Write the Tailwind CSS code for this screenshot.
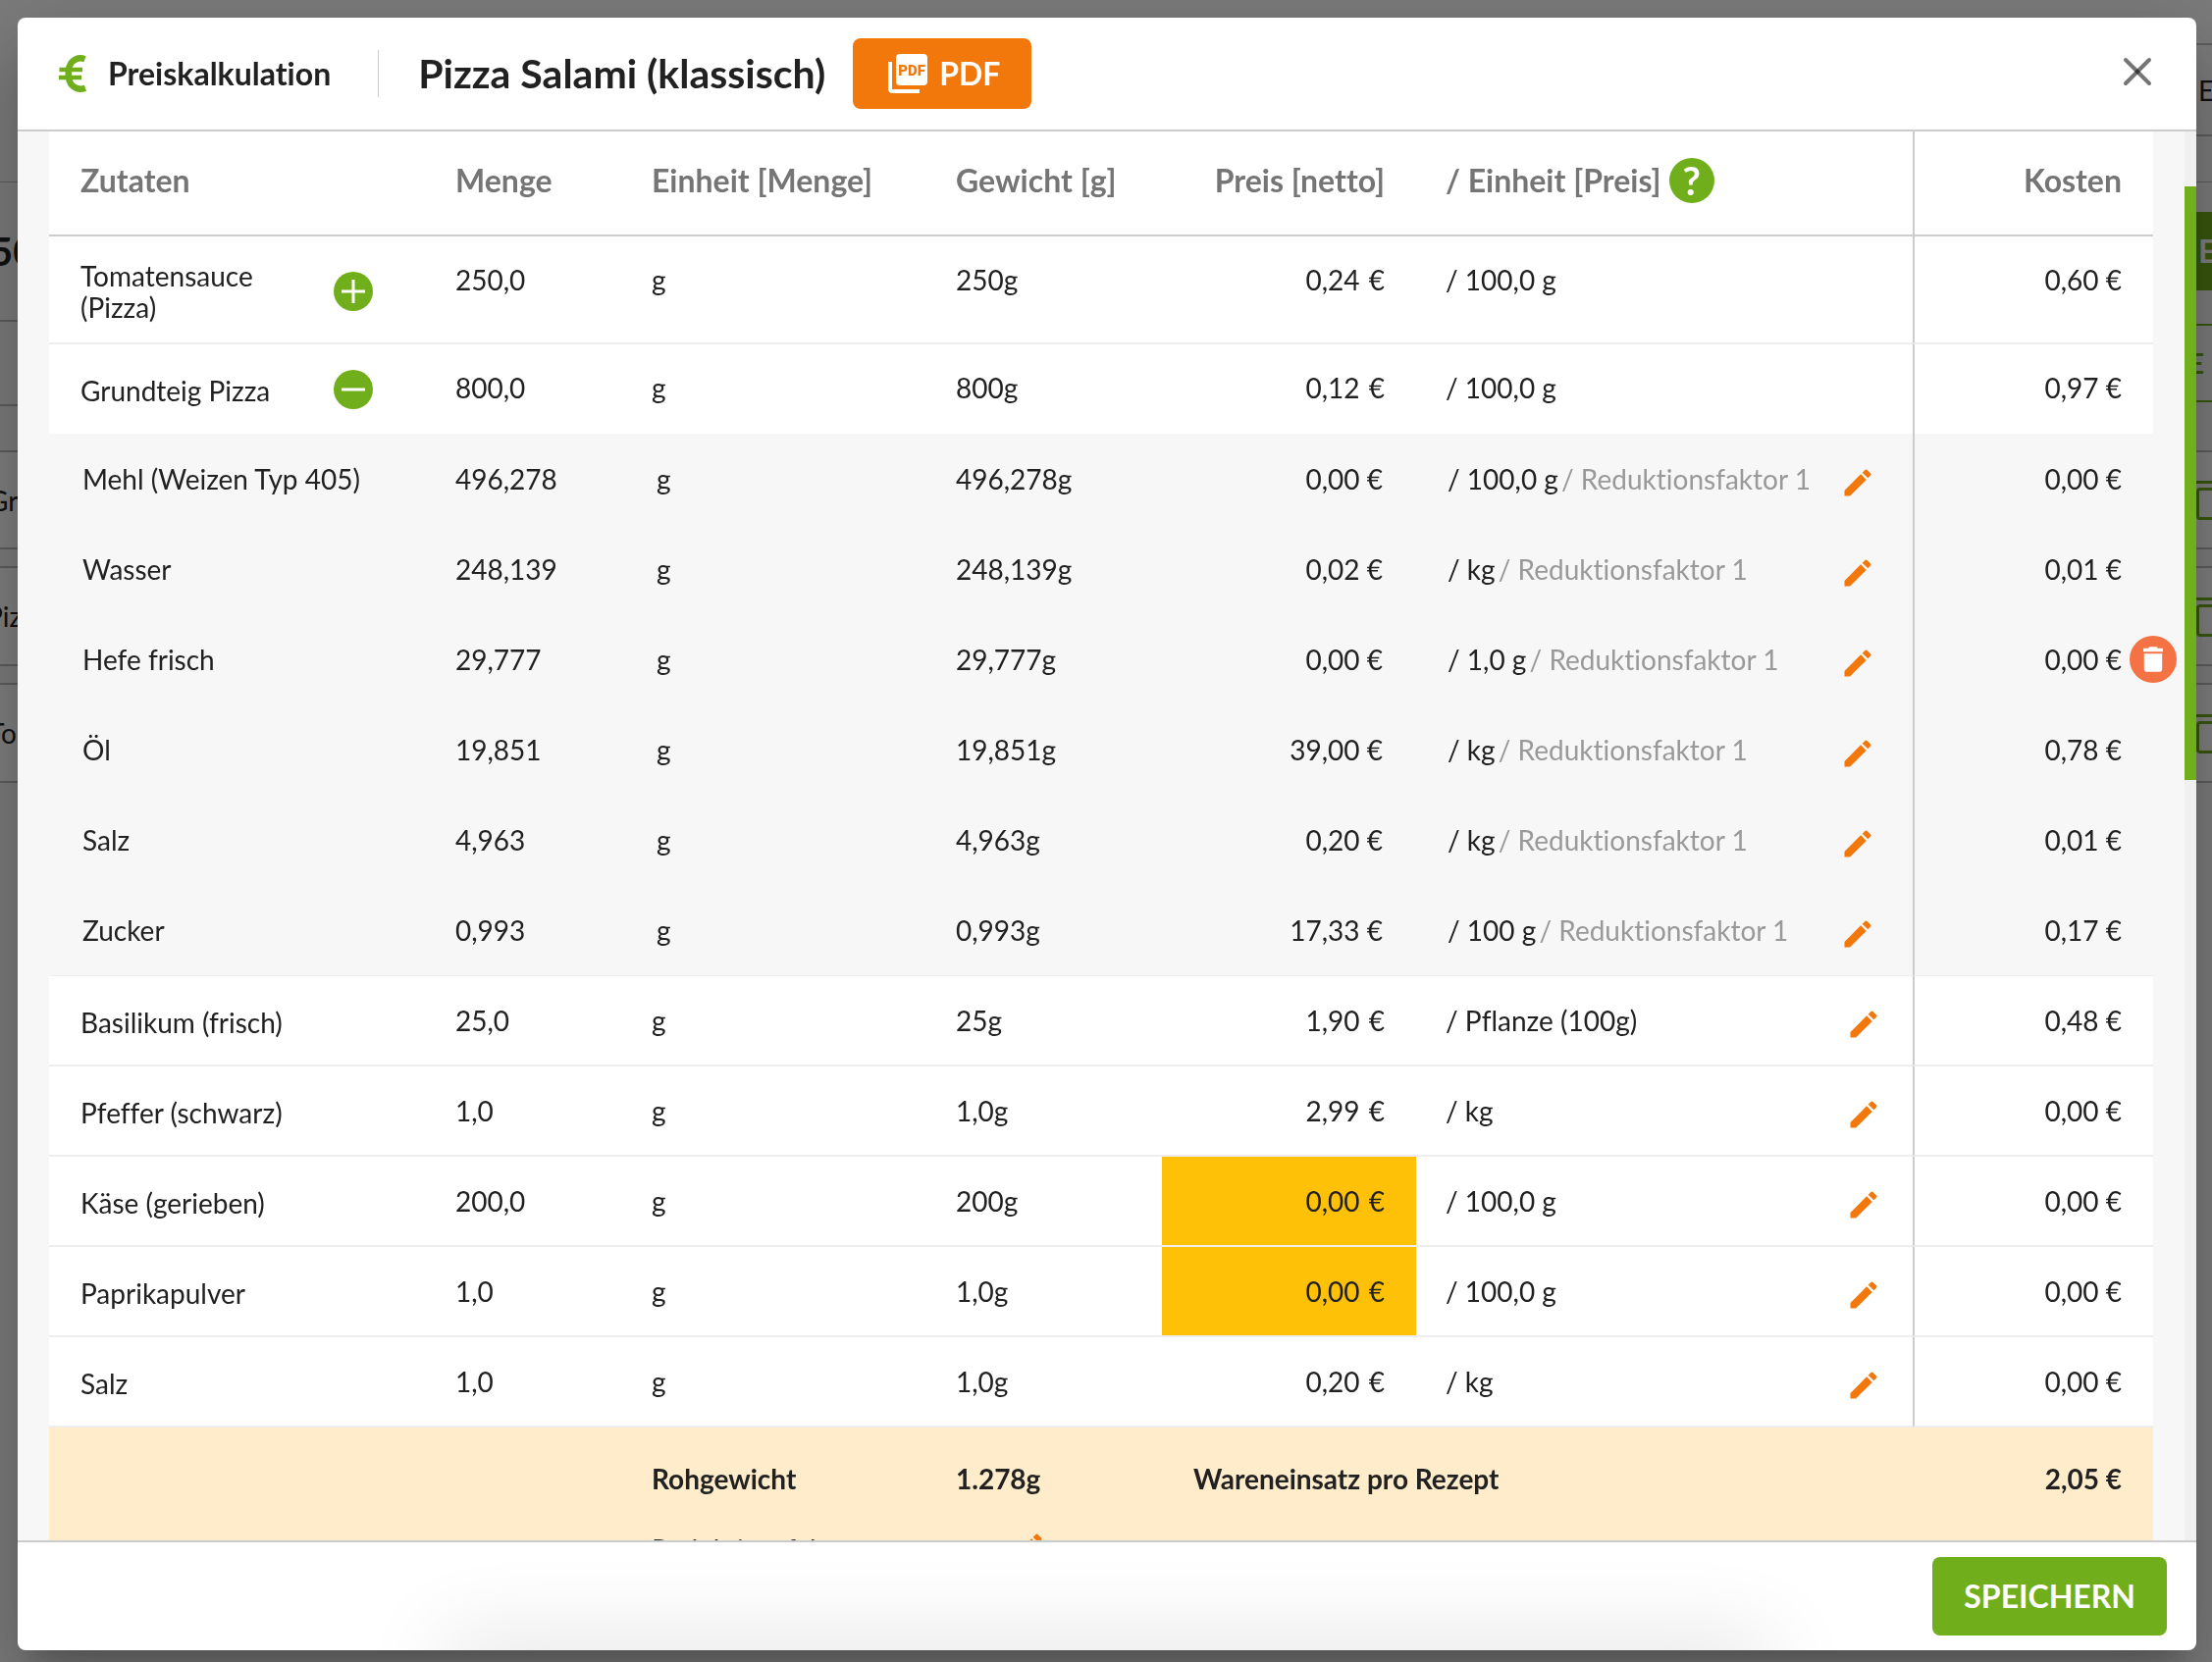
<!DOCTYPE html>
<html lang="de">
<head>
<meta charset="utf-8">
<title>Preiskalkulation</title>
<script src="https://cdn.jsdelivr.net/npm/@tailwindcss/browser@4"></script>
</head>
<body class="h-screen overflow-hidden bg-[#f7f7f7] font-['Lato',sans-serif] text-[28px] leading-8 text-[#212121] [font-variant-ligatures:no-common-ligatures]">

<!-- Page behind the dialog -->
<div aria-hidden="true" class="flex h-screen justify-between overflow-hidden">
  <div class="w-24 overflow-hidden">
    <div class="h-[186px] border-b border-[#bbb]"></div>
    <div class="flex h-[142px] items-center border-b-2 border-[#bbb]"><span class="-ml-2.5 text-[40px] font-bold">50</span></div>
    <div class="h-[86px] border-b-2 border-[#bbb]"></div>
    <div class="mt-[45px] flex h-[101px] items-center border-y-2 border-[#bbb] bg-white"><span class="-ml-3">Gr</span></div>
    <div class="mt-[17px] flex h-[102px] items-center border-y-2 border-[#bbb] bg-white"><span class="-ml-3.5">Piz</span></div>
    <div class="mt-[17px] flex h-[102px] items-center border-y-2 border-[#bbb] bg-white"><span class="-ml-3">To</span></div>
  </div>
  <div class="w-6 overflow-hidden">
    <div class="mt-11 flex h-[95px] items-center border-y-2 border-[#bbb] text-[28px]"><span class="-ml-4">ME</span></div>
    <div class="h-[47px] border-b border-[#bbb]"></div>
    <div class="mt-[30px] flex h-20 items-center bg-[#70ae1b] pl-2.5 text-[32px] font-bold text-white">E</div>
    <div class="mt-[34px] flex h-20 items-center border-y-2 border-[#70ae1b] text-[28px] font-bold text-[#70ae1b]">E&nbsp;I</div>
    <div class="mt-[49px] h-[101px] border-y-2 border-[#bbb] bg-white pt-[29px]"><div class="h-[3px] bg-[#70ae1b]"></div><div class="ml-2 mt-1 h-[33px] w-8 rounded border-[3px] border-[#70ae1b]"></div></div>
    <div class="mt-[17px] h-[102px] border-y-2 border-[#bbb] bg-white pt-[30px]"><div class="h-[3px] bg-[#70ae1b]"></div><div class="ml-2 mt-1 h-[33px] w-8 rounded border-[3px] border-[#70ae1b]"></div></div>
    <div class="mt-[17px] h-[102px] border-y-2 border-[#bbb] bg-white pt-[30px]"><div class="h-[3px] bg-[#70ae1b]"></div><div class="ml-2 mt-1 h-[33px] w-8 rounded border-[3px] border-[#70ae1b]"></div></div>
  </div>
</div>

<svg class="hidden">
  <symbol id="pencil" viewBox="0 0 24 24"><path fill="currentColor" d="M3 17.25V21h3.75L17.81 9.94l-3.75-3.75L3 17.25zM20.71 7.04a1 1 0 0 0 0-1.41l-2.34-2.34a1 1 0 0 0-1.41 0l-1.83 1.83 3.75 3.75 1.83-1.83z"/></symbol>
</svg>

<!-- Dialog -->
<div class="fixed inset-0 flex bg-black/50 px-4 pb-3 pt-[18px] pl-[18px]">
  <section role="dialog" aria-labelledby="title" class="flex min-h-0 flex-1 flex-col rounded-lg bg-white shadow-[0_22px_30px_-14px_rgba(0,0,0,0.2),0_48px_76px_6px_rgba(0,0,0,0.14),0_18px_92px_16px_rgba(0,0,0,0.12)]">
    <header class="flex h-[116px] shrink-0 items-center border-b-2 border-[#ccc] pl-[42px] pr-11">
      <svg class="h-10 w-7 text-[#70ae1b]" viewBox="0 0 28 40" fill="none" stroke="currentColor"><path stroke-width="6.500" d="M26.500 5.200C22 3.500 17 4.500 13.500 8C8.500 13 8.500 27 13.500 32C17 35.500 22 36.500 27 34.800"/><path stroke-width="4.500" d="M0.500 16H24M0 24H23"/></svg>
      <span class="ml-[22px] text-[32px] font-bold leading-10">Preiskalkulation</span>
      <span class="ml-12 h-12 w-px bg-[#ccc]"></span>
      <h1 id="title" class="ml-10 text-[41px] font-bold leading-12">Pizza Salami (klassisch)</h1>
      <button class="ml-7 flex h-[72px] items-center gap-2 rounded-lg bg-[#f3780c] px-8 text-[32px] font-bold text-white">
        <svg class="size-12" viewBox="0 0 24 24"><rect x="6" y="2" width="16" height="16" rx="2" fill="#fff"/><path fill="#fff" d="M4 6H2v14c0 1.100.9 2 2 2h14v-2H4z"/><text x="14" y="13" text-anchor="middle" font-family="Roboto, sans-serif" font-weight="900" font-size="7.500" fill="#f3780c">PDF</text></svg>
        PDF
      </button>
      <button aria-label="Schließen" class="mb-1 ml-auto size-8">
        <svg class="size-8" viewBox="0 0 32 32" stroke="#000" stroke-opacity=".54" stroke-width="4" stroke-linecap="round"><path d="M4 4L28 28"/><path d="M28 4L4 28"/></svg>
      </button>
    </header>

    <div class="flex min-h-0 flex-1 overflow-hidden bg-[#f7f7f7]">
      <div class="min-w-0 flex-1 px-8">
        <table class="w-full table-fixed border-separate border-spacing-0 bg-white">
          <colgroup><col class="w-[382px]"><col class="w-[200px]"><col class="w-[310px]"><col class="w-[242px]"><col class="w-[259px]"><col><col class="w-[245px]"></colgroup>
          <thead>
            <tr class="h-[107px] text-left text-[32px] text-[#757575] *:border-b-2 *:border-[#ccc] *:pb-1.5 *:font-bold *:whitespace-nowrap">
              <th class="pl-8">Zutaten</th><th class="pl-8">Menge</th><th class="pl-8">Einheit [Menge]</th><th class="pl-8">Gewicht [g]</th><th class="pr-8 text-right">Preis [netto]</th>
              <th class="pl-[30px]"><span class="flex items-center gap-2">/ Einheit [Preis] <button aria-label="Hilfe" class="flex size-[46px] items-center justify-center rounded-full bg-[#70ae1b] text-[40px] font-bold leading-none text-white">?</button></span></th>
              <th class="border-l-2 pr-8 text-right">Kosten</th>
            </tr>
          </thead>
          <tbody id="rows"></tbody>
          <tfoot>
            <tr class="h-[72px] bg-[#feecca] font-bold *:px-8 *:pt-9 *:align-top">
              <td></td><td></td><td>Rohgewicht</td><td>1.278g</td><td colspan="2">Wareneinsatz pro Rezept</td><td class="text-right">2,05 €</td>
            </tr>
            <tr class="h-[72px] bg-[#feecca] *:px-8 *:pt-9 *:align-top">
              <td></td><td></td><td>Reduktionsfaktor</td><td><button aria-label="Bearbeiten" class="-mt-1 ml-14 block text-[#f3780c]"><svg class="size-9"><use href="#pencil"/></svg></button></td><td colspan="2"></td><td></td>
            </tr>
          </tfoot>
        </table>
      </div>
      <div class="w-3 shrink-0 bg-[#f0f0f0] pt-14"><div class="h-[605px] bg-[#70ae1b]"></div></div>
    </div>

    <footer class="relative flex h-28 shrink-0 items-center justify-end overflow-hidden rounded-b-lg border-t-2 border-[#ccc] pr-[30px]">
      <div class="absolute left-[20%] right-[20%] top-full h-10 shadow-[0_0_90px_10px_rgba(0,0,0,0.12)]"></div>
      <button class="relative h-20 rounded-lg bg-[#70ae1b] px-8 text-[32px] font-bold text-white">SPEICHERN</button>
    </footer>
  </section>
</div>

<script>
  const REDUCTION = 'Reduktionsfaktor 1';
  // sub: ingredient nested in the opened recipe; missing: no price entered yet
  const rows = [
    { name: 'Tomatensauce (Pizza)', toggle: 'plus', qty: '250,0', weight: '250g', price: '0,24', unit: '100,0 g', cost: '0,60', tall: true },
    { name: 'Grundteig Pizza', toggle: 'minus', qty: '800,0', weight: '800g', price: '0,12', unit: '100,0 g', cost: '0,97', open: true },
    { sub: true, name: 'Mehl (Weizen Typ 405)', qty: '496,278', weight: '496,278g', price: '0,00', unit: '100,0 g', cost: '0,00' },
    { sub: true, name: 'Wasser', qty: '248,139', weight: '248,139g', price: '0,02', unit: 'kg', cost: '0,01' },
    { sub: true, name: 'Hefe frisch', qty: '29,777', weight: '29,777g', price: '0,00', unit: '1,0 g', cost: '0,00', remove: true },
    { sub: true, name: 'Öl', qty: '19,851', weight: '19,851g', price: '39,00', unit: 'kg', cost: '0,78' },
    { sub: true, name: 'Salz', qty: '4,963', weight: '4,963g', price: '0,20', unit: 'kg', cost: '0,01' },
    { sub: true, name: 'Zucker', qty: '0,993', weight: '0,993g', price: '17,33', unit: '100 g', cost: '0,17', last: true },
    { name: 'Basilikum (frisch)', qty: '25,0', weight: '25g', price: '1,90', unit: 'Pflanze (100g)', cost: '0,48' },
    { name: 'Pfeffer (schwarz)', qty: '1,0', weight: '1,0g', price: '2,99', unit: 'kg', cost: '0,00' },
    { name: 'Käse (gerieben)', qty: '200,0', weight: '200g', price: '0,00', unit: '100,0 g', cost: '0,00', missing: true },
    { name: 'Paprikapulver', qty: '1,0', weight: '1,0g', price: '0,00', unit: '100,0 g', cost: '0,00', missing: true },
    { name: 'Salz', qty: '1,0', weight: '1,0g', price: '0,20', unit: 'kg', cost: '0,00' },
  ];
  const pencil = '<button aria-label="Bearbeiten" class="mt-2 text-[#f3780c]"><svg class="size-9"><use href="#pencil"/></svg></button>';
  const toggle = t => `<button aria-label="${t === 'plus' ? 'Aufklappen' : 'Zuklappen'}" class="size-10 shrink-0 rounded-full bg-[#70ae1b]"><svg class="size-10" viewBox="0 0 40 40" stroke="#fff" stroke-width="3"><path d="${t === 'plus' ? 'M8 20H32M20 8V32' : 'M8 20H32'}"/></svg></button>`;
  const trash = '<button aria-label="Löschen" class="absolute -right-6 top-[22px] flex size-12 items-center justify-center rounded-full bg-[#f57245]"><svg class="size-[34px]" viewBox="0 0 24 24"><path fill="#fff" d="M5.500 8v11c0 1.200.9 2 2 2h9c1.100 0 2-.8 2-2V8zM19 4h-3.500l-1-1h-5l-1 1H5v2.500h14z"/></svg></button>';

  document.getElementById('rows').innerHTML = rows.map(r => {
    const height = r.tall ? 'h-[110px]' : r.open ? 'h-[91px]' : r.last ? 'h-[93px]' : 'h-[92px]';
    const line = r.sub ? (r.last ? '*:border-b *:border-[#eee]' : '') : r.open ? '' : '*:border-b-2 *:border-[#eee]';
    const look = r.sub ? 'bg-[#f7f7f7] *:pt-[30px]' : r.toggle ? '*:pt-7' : '*:pt-[29px]';
    return `<tr class="${height} ${line} ${look} *:align-top *:whitespace-nowrap">
      <td class="pl-8 pr-[52px]"><div class="flex justify-between items-center ${r.tall ? '-mt-1' : r.open ? '-mt-0.5' : ''}"><span class="${r.sub ? 'pl-0.5' : r.tall ? 'whitespace-normal w-52' : 'pt-0.5'}">${r.name}</span>${r.toggle ? toggle(r.toggle) : ''}</div></td>
      <td class="pl-8">${r.qty}</td>
      <td class="${r.sub ? 'pl-[37px]' : 'pl-8'}">g</td>
      <td class="pl-8">${r.weight}</td>
      <td class="${r.sub ? 'pr-[34px]' : 'pr-8'} text-right ${r.missing ? 'bg-[#fec107]' : ''}">${r.price} <span class="${r.sub ? '' : 'pl-0.5'}">€</span></td>
      <td class="${r.sub ? 'pl-8 pr-[38px]' : 'pl-[30px] pr-8'}"><div class="flex h-8 items-center justify-between"><span>/ ${r.unit}${r.sub ? ` <span class="-ml-1 text-[#999]">/ ${REDUCTION}</span>` : ''}</span>${r.toggle ? '' : pencil}</div></td>
      <td class="relative border-l-2 border-l-[#ccc]! pr-8 text-right">${r.cost} €${r.remove ? trash : ''}</td>
    </tr>`;
  }).join('');
</script>
</body>
</html>
